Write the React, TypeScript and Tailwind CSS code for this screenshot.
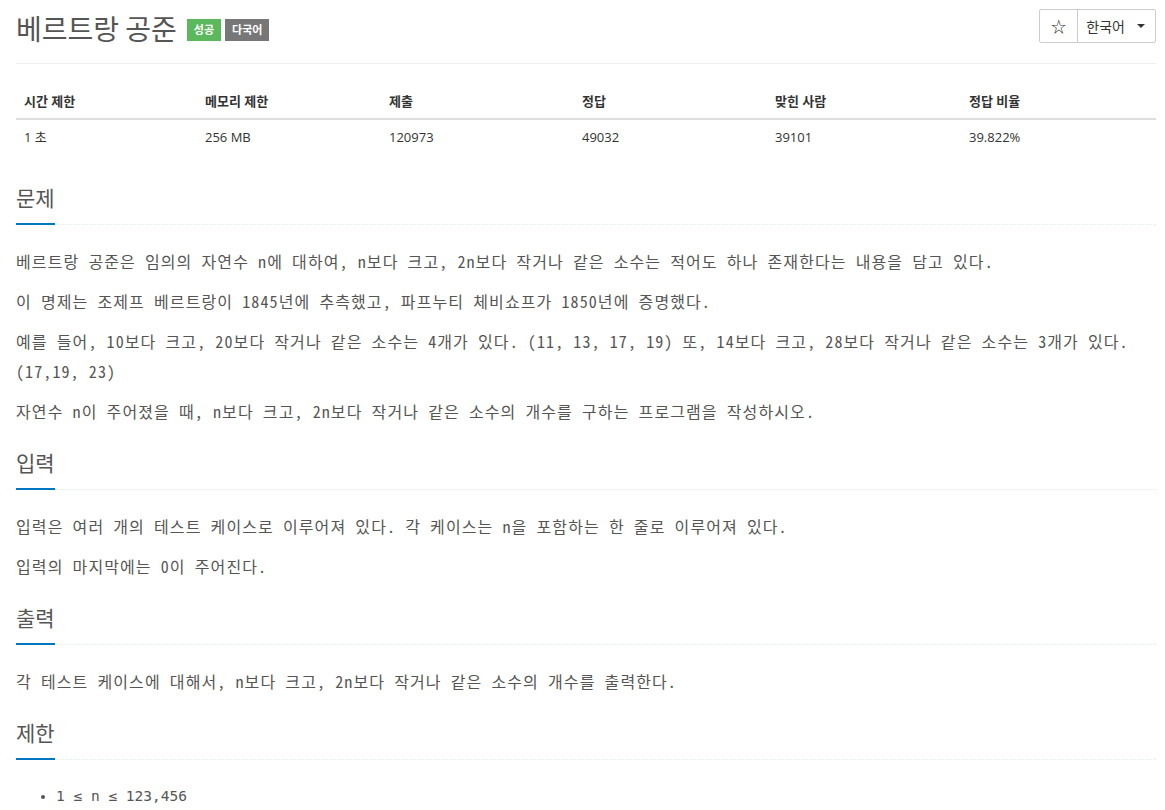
import React from "react";

const bodyFont = {
  fontFamily: '"Noto Sans Mono CJK KR", "Liberation Mono", "Noto Sans CJK KR", monospace',
};

function Headline({ title }: { title: string }) {
  return (
    <div className="mt-[24px] mb-[21px] border-b border-dotted border-[#e4e9f0]">
      <h2
        className="-mb-px inline-block border-b-2 border-[#0076c0] pb-[14px] text-[21px] leading-[24px] text-[#555] font-normal"
        style={{ fontFamily: '"Noto Sans CJK KR", sans-serif' }}
      >
        {title}
      </h2>
    </div>
  );
}

function P({ children }: { children: React.ReactNode }) {
  return <p className="mb-[10px] text-[16px] leading-[30px] tracking-[1.1px] text-[#555]">{children}</p>;
}

export default function App() {
  const heads = ["시간 제한", "메모리 제한", "제출", "정답", "맞힌 사람", "정답 비율"];
  const vals = ["1 초", "256 MB", "120973", "49032", "39101", "39.822%"];
  return (
    <div
      className="min-h-screen bg-white pl-4 pr-[9px] text-[#333]"
      style={{ fontFamily: '"Open Sans", "Noto Sans CJK KR", sans-serif' }}
    >
      <div className="flex items-start justify-between border-b border-[#eee] pt-[8px] pb-[15px]">
        <div className="flex items-center">
          <h1
            className="text-[28px] leading-[40px] text-[#555] font-normal"
            style={{ fontFamily: '"Noto Sans CJK KR", sans-serif' }}
          >
            베르트랑 공준
          </h1>
          <span className="ml-[10px] mt-[4px] bg-[#5cb85c] px-[7px] text-[11px] leading-[22px] font-bold text-white">
            성공
          </span>
          <span className="ml-[4px] mt-[4px] bg-[#777] px-[7px] text-[11px] leading-[22px] font-bold text-white">
            다국어
          </span>
        </div>
        <div className="mt-px flex h-[34px] rounded-[2px] border border-[#ccc] text-[14px] text-[#333]">
          <div className="flex w-[38px] items-center justify-center border-r border-[#ccc] text-[15px]">
            ☆
          </div>
          <div className="flex items-center gap-[12px] pl-[8px] pr-[10px]">
            <span>한국어</span>
            <span className="h-0 w-0 border-x-[4px] border-t-[4px] border-x-transparent border-t-[#333]" />
          </div>
        </div>
      </div>

      <div className="mt-[20px] mb-[31px] text-[13px]">
        <div className="grid grid-cols-[181px_184px_193px_193px_194px_195px] border-b-2 border-[#ddd]">
          {heads.map((h) => (
            <div key={h} className="p-[8px] leading-[18px] font-bold">
              {h}
            </div>
          ))}
        </div>
        <div className="grid grid-cols-[181px_184px_193px_193px_194px_195px]">
          {vals.map((v) => (
            <div key={v} className="p-[8px] leading-[18px]">
              {v}
            </div>
          ))}
        </div>
      </div>

      <div style={bodyFont}>
        <Headline title="문제" />
        <P>
          베르트랑 공준은 임의의 자연수 n에 대하여, n보다 크고, 2n보다 작거나 같은 소수는 적어도 하나 존재한다는 내용을 담고 있다.
        </P>
        <P>이 명제는 조제프 베르트랑이 1845년에 추측했고, 파프누티 체비쇼프가 1850년에 증명했다.</P>
        <P>
          예를 들어, 10보다 크고, 20보다 작거나 같은 소수는 4개가 있다. (11, 13, 17, 19) 또, 14보다 크고, 28보다 작거나 같은 소수는 3개가 있다. (17,19, 23)
        </P>
        <P>자연수 n이 주어졌을 때, n보다 크고, 2n보다 작거나 같은 소수의 개수를 구하는 프로그램을 작성하시오.</P>

        <Headline title="입력" />
        <P>입력은 여러 개의 테스트 케이스로 이루어져 있다. 각 케이스는 n을 포함하는 한 줄로 이루어져 있다.</P>
        <P>입력의 마지막에는 0이 주어진다.</P>

        <Headline title="출력" />
        <P>각 테스트 케이스에 대해서, n보다 크고, 2n보다 작거나 같은 소수의 개수를 출력한다.</P>

        <Headline title="제한" />
        <ul
          className="list-disc pl-[40px] text-[14.5px] leading-[30px] text-[#555]"
          style={{ fontFamily: '"DejaVu Sans Mono", "Liberation Mono", monospace' }}
        >
          <li>1 ≤ n ≤ 123,456</li>
        </ul>
      </div>
    </div>
  );
}
